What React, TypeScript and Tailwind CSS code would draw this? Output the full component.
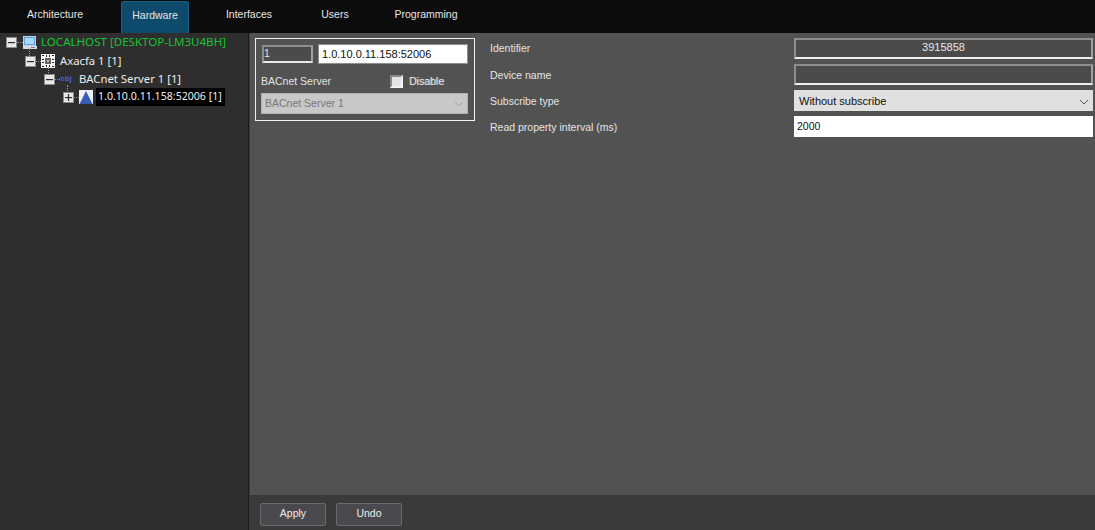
import React from "react";

const sans = "font-['Liberation_Sans',Arial,sans-serif]";
const tree = "font-['Noto_Sans',sans-serif]";

function Box({ plus = false }: { plus?: boolean }) {
  return (
    <svg width="11" height="11" viewBox="0 0 11 11" className="shrink-0 relative">
      <rect x="0.5" y="0.5" width="10" height="10" fill="#e8e8e8" stroke="#8a8a8a" />
      <rect x="2" y="5" width="7" height="1.2" fill="#2a2a3a" />
      {plus && <rect x="4.9" y="2" width="1.2" height="7" fill="#2a2a3a" />}
    </svg>
  );
}

function Dots({ w }: { w: number }) {
  return <span className="shrink-0 border-t border-dotted border-[#8a8a8a] h-0" style={{ width: w }} />;
}

function Drop({ left }: { left: string }) {
  return <span className={`absolute ${left} top-[15px] h-[8px] border-l border-dotted border-[#9a9a9a]`} />;
}

function Monitor() {
  return (
    <svg width="14" height="13" viewBox="0 0 14 13" className="shrink-0">
      <rect x="0.5" y="0.5" width="12" height="9" fill="#5f9fdc" stroke="#bcd4ec" />
      <rect x="2" y="2" width="9" height="6" fill="#a8d8f6" />
      <rect x="0" y="10" width="14" height="3" fill="#d8d8e4" />
      <rect x="8" y="11" width="4" height="1" fill="#7080a0" />
    </svg>
  );
}

function Chip() {
  return (
    <svg width="14" height="14" viewBox="0 0 14 14" className="shrink-0">
      <rect width="14" height="14" fill="#f6f6f6" />
      <rect x="4" y="4" width="6" height="6" fill="#666" />
      <rect x="6" y="6" width="2" height="2" fill="#bbb" />
      <path d="M1 1h2v1H1zM5 1h1v2H5zM8 1h1v2H8zM11 1h2v1h-2zM1 5h2v1H1zM11 5h2v1h-2zM1 8h2v1H1zM11 8h2v1h-2zM1 12h2v1H1zM5 11h1v2H5zM8 11h1v2H8zM11 12h2v1h-2z" fill="#222" />
    </svg>
  );
}

function Triangle() {
  return (
    <svg width="14" height="14" viewBox="0 0 14 14" className="shrink-0">
      <rect width="14" height="14" fill="#eef0f6" />
      <path d="M7 1L13.5 14H0.5z" fill="#3a5cb4" />
    </svg>
  );
}

function Chevron({ color }: { color: string }) {
  return (
    <svg width="10" height="6" viewBox="0 0 10 6" className="shrink-0">
      <path d="M1 1l4 4 4-4" fill="none" stroke={color} strokeWidth="1" />
    </svg>
  );
}

function Tab({ label, active, className }: { label: string; active?: boolean; className: string }) {
  return (
    <div
      className={`h-[32px] pb-[4px] flex items-center justify-center text-[10.5px] text-[#e6e6e6] rounded-t-[3px] ${
        active ? "bg-[#0e4a6c] border border-b-0 border-[#1c5f86]" : ""
      } ${className}`}
    >
      {label}
    </div>
  );
}

function Label({ children, first }: { children: React.ReactNode; first?: boolean }) {
  return <div className={`w-[304px] shrink-0 text-[10.5px] text-[#e4e4e4] ${first ? "pt-[1px]" : "pt-[3px]"}`}>{children}</div>;
}

const darkField = "w-[299px] h-[21px] pb-[3px] bg-[#4b4b4b] border-2 border-t-[#8e8e8e] border-l-[#8e8e8e] border-r-[#a0a0a0] border-b-[#f0f0f0] flex items-center justify-center text-[11px] text-[#e8e8e8]";

const button = "w-[66px] h-[23px] bg-[#4a4a4e] border border-[#6a6a6a] rounded-[2px] flex items-center justify-center text-[10.5px] text-[#ececec]";

export default function App() {
  return (
    <div className={`w-[1095px] h-[530px] flex flex-col overflow-hidden bg-[#0c0c0c] ${sans}`}>
      <div className="h-[33px] shrink-0 flex items-end bg-[#0c0c0c] pl-[10px]">
        <Tab label="Architecture" className="w-[90px]" />
        <Tab label="Hardware" active className="w-[68px] ml-[21px]" />
        <Tab label="Interfaces" className="w-[70px] ml-[25px]" />
        <Tab label="Users" className="w-[50px] ml-[26px]" />
        <Tab label="Programming" className="w-[80px] ml-[26px]" />
      </div>
      <div className="flex-1 flex min-h-0">
        <div className={`w-[249px] shrink-0 bg-[#2e2e2e] border-r border-[#1c1c1c] ${tree} text-[11.3px] text-[#ececec]`}>
          <div className="h-[18px] relative flex items-center pl-[6px]">
            <Drop left="left-[29px]" />
            <Box />
            <Dots w={6} />
            <Monitor />
            <span className="ml-[4px] text-[#16c332] text-[11.55px] leading-none">LOCALHOST [DESKTOP-LM3U4BH]</span>
          </div>
          <div className="h-[18px] mt-[1px] relative flex items-center pl-[25px]">
            <Drop left="left-[48px]" />
            <Box />
            <Dots w={5} />
            <Chip />
            <span className="ml-[5px]">Axacfa 1 [1]</span>
          </div>
          <div className="h-[18px] relative flex items-center pl-[44px]">
            <Drop left="left-[67px]" />
            <Box />
            <Dots w={5} />
            <span className="w-[14px] text-[7.5px] leading-none text-[#4a5bc0] font-bold">obj</span>
            <span className="ml-[5px]">BACnet Server 1 [1]</span>
          </div>
          <div className="h-[18px] relative flex items-center pl-[63px]">
            <Box plus />
            <Dots w={5} />
            <Triangle />
            <span className="ml-[3px] bg-black h-[18px] pl-[2px] pr-[3px] flex items-center text-[10.6px]">1.0.10.0.11.158:52006 [1]</span>
          </div>
        </div>
        <div className="flex-1 flex flex-col bg-[#525252] border-l border-[#3c3c3c]">
          <div className="flex-1 flex items-start pt-[5px] pl-[5px]">
            <div className="w-[220px] h-[83px] border border-[#f0f0f0] shrink-0 pt-[5px] px-[5px]">
              <div className="flex items-center gap-[5px]">
                <div className="w-[51px] h-[18px] ml-[1px] bg-[#4b4b4b] border-2 border-t-[#8e8e8e] border-l-[#8e8e8e] border-r-[#a0a0a0] border-b-[#e8e8e8] text-[10.5px] text-[#e8e8e8] flex items-center">1</div>
                <div className="w-[150px] h-[20px] bg-white border border-[#8e8e8e] text-[11px] text-[#111] flex items-center pl-[3px]">1.0.10.0.11.158:52006</div>
              </div>
              <div className="flex items-center h-[17px] mt-[9px]">
                <span className="w-[129px] text-[10.5px] text-[#e4e4e4]">BACnet Server</span>
                <span className="w-[13px] h-[13px] bg-[#e4e4e4] border-2 border-t-[#8a8a8a] border-l-[#8a8a8a] border-r-[#f4f4f4] border-b-[#f4f4f4] shrink-0" />
                <span className="ml-[6px] text-[10.5px] text-[#e8e8e8] [text-shadow:1px_0_0_rgba(255,255,255,0.3)]">Disable</span>
              </div>
              <div className="mt-[3px] w-[207px] h-[21px] pt-[1px] bg-[#c8c8c8] border border-[#b0b0b0] flex items-center justify-between pl-[3px] pr-[3px] text-[10.5px] text-[#777]">
                BACnet Server 1
                <Chevron color="#a8a8a8" />
              </div>
            </div>
            <div className="flex-1 ml-[15px] flex flex-col gap-[5px]">
              <div className="flex items-center">
                <Label first>Identifier</Label>
                <div className={darkField}>3915858</div>
              </div>
              <div className="flex items-center">
                <Label>Device name</Label>
                <div className={darkField} />
              </div>
              <div className="flex items-center">
                <Label>Subscribe type</Label>
                <div className="w-[299px] h-[21px] pt-[2px] bg-[#e0e0e0] flex items-center justify-between pl-[5px] pr-[4px] text-[11px] text-[#111]">
                  Without subscribe
                  <Chevron color="#555" />
                </div>
              </div>
              <div className="flex items-center">
                <Label>Read property interval (ms)</Label>
                <div className="w-[299px] h-[21px] pt-[1px] bg-white flex items-center pl-[3px] text-[10.5px] text-[#111]">2000</div>
              </div>
            </div>
          </div>
          <div className="h-[35px] shrink-0 bg-[#3a3a3a] flex items-center pl-[10px] gap-[10px] pt-[3px]">
            <div className={button}>Apply</div>
            <div className={button}>Undo</div>
          </div>
        </div>
      </div>
    </div>
  );
}
